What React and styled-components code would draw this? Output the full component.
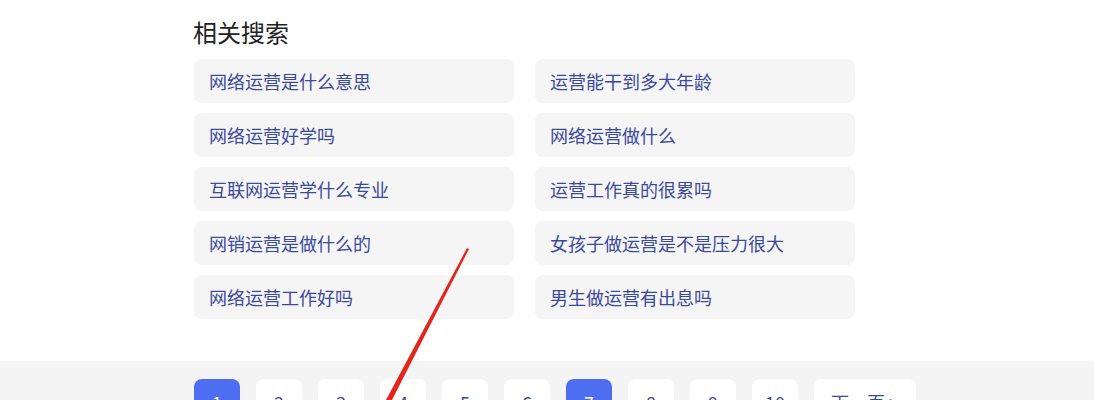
import React from 'react'
import styled, { createGlobalStyle } from 'styled-components'

const GlobalStyle = createGlobalStyle`
  html, body {
    margin: 0;
    padding: 0;
    background: #fff;
    font-family: "Noto Sans CJK SC", "Noto Sans", Arial, sans-serif;
  }
`

const related = [
  '网络运营是什么意思', '运营能干到多大年龄',
  '网络运营好学吗', '网络运营做什么',
  '互联网运营学什么专业', '运营工作真的很累吗',
  '网销运营是做什么的', '女孩子做运营是不是压力很大',
  '网络运营工作好吗', '男生做运营有出息吗',
]

const pages = ['1', '2', '3', '4', '5', '6', '7', '8', '9', '10']

function App() {
  return (
    <Page>
      <GlobalStyle />
      <Section>
        <Heading>相关搜索</Heading>
        <Grid>
          {related.map(text => (
            <Card key={text}>{text}</Card>
          ))}
        </Grid>
      </Section>
      <Pager>
        {pages.map(p => (
          <PageButton key={p} active={p === '1' || p === '7'}>{p}</PageButton>
        ))}
        <NextButton>下一页 &gt;</NextButton>
      </Pager>
      <Arrow width="1094" height="400" viewBox="0 0 1094 400">
        <polygon points="467,248 469,249 392,400 386,400" fill="#e3261c" />
      </Arrow>
    </Page>
  )
}

const Page = styled.div`
  position: relative;
  width: 1094px;
  height: 400px;
  overflow: hidden;
`

const Section = styled.div`
  padding: 16px 0 0 194px;
  height: 361px;
  box-sizing: border-box;
`

const Heading = styled.h3`
  margin: 0 0 11px -1px;
  font-size: 24px;
  line-height: 32px;
  font-weight: 400;
  color: #222;
`

const Grid = styled.div`
  display: grid;
  grid-template-columns: 320px 320px;
  column-gap: 21px;
  row-gap: 10px;
`

const Card = styled.div`
  height: 44px;
  box-sizing: border-box;
  padding: 0 16px 0 15px;
  display: flex;
  align-items: center;
  background: #f5f5f6;
  border-radius: 8px;
  font-size: 18px;
  color: #3a49a0;
  white-space: nowrap;
`

const Pager = styled.div`
  display: flex;
  gap: 16px;
  padding: 18px 0 20px 194px;
  background: #f4f4f5;
  height: 100px;
  box-sizing: border-box;
`

const PageButton = styled.div`
  width: 46px;
  height: 46px;
  display: flex;
  align-items: center;
  justify-content: center;
  border-radius: 8px;
  font-size: 18px;
  background: ${p => (p.active ? '#4e6ef2' : '#fff')};
  color: ${p => (p.active ? '#fff' : '#3a49a0')};
`

const NextButton = styled(PageButton)`
  width: 102px;
`

const Arrow = styled.svg`
  position: absolute;
  left: 0;
  top: 0;
  pointer-events: none;
`

export default App
